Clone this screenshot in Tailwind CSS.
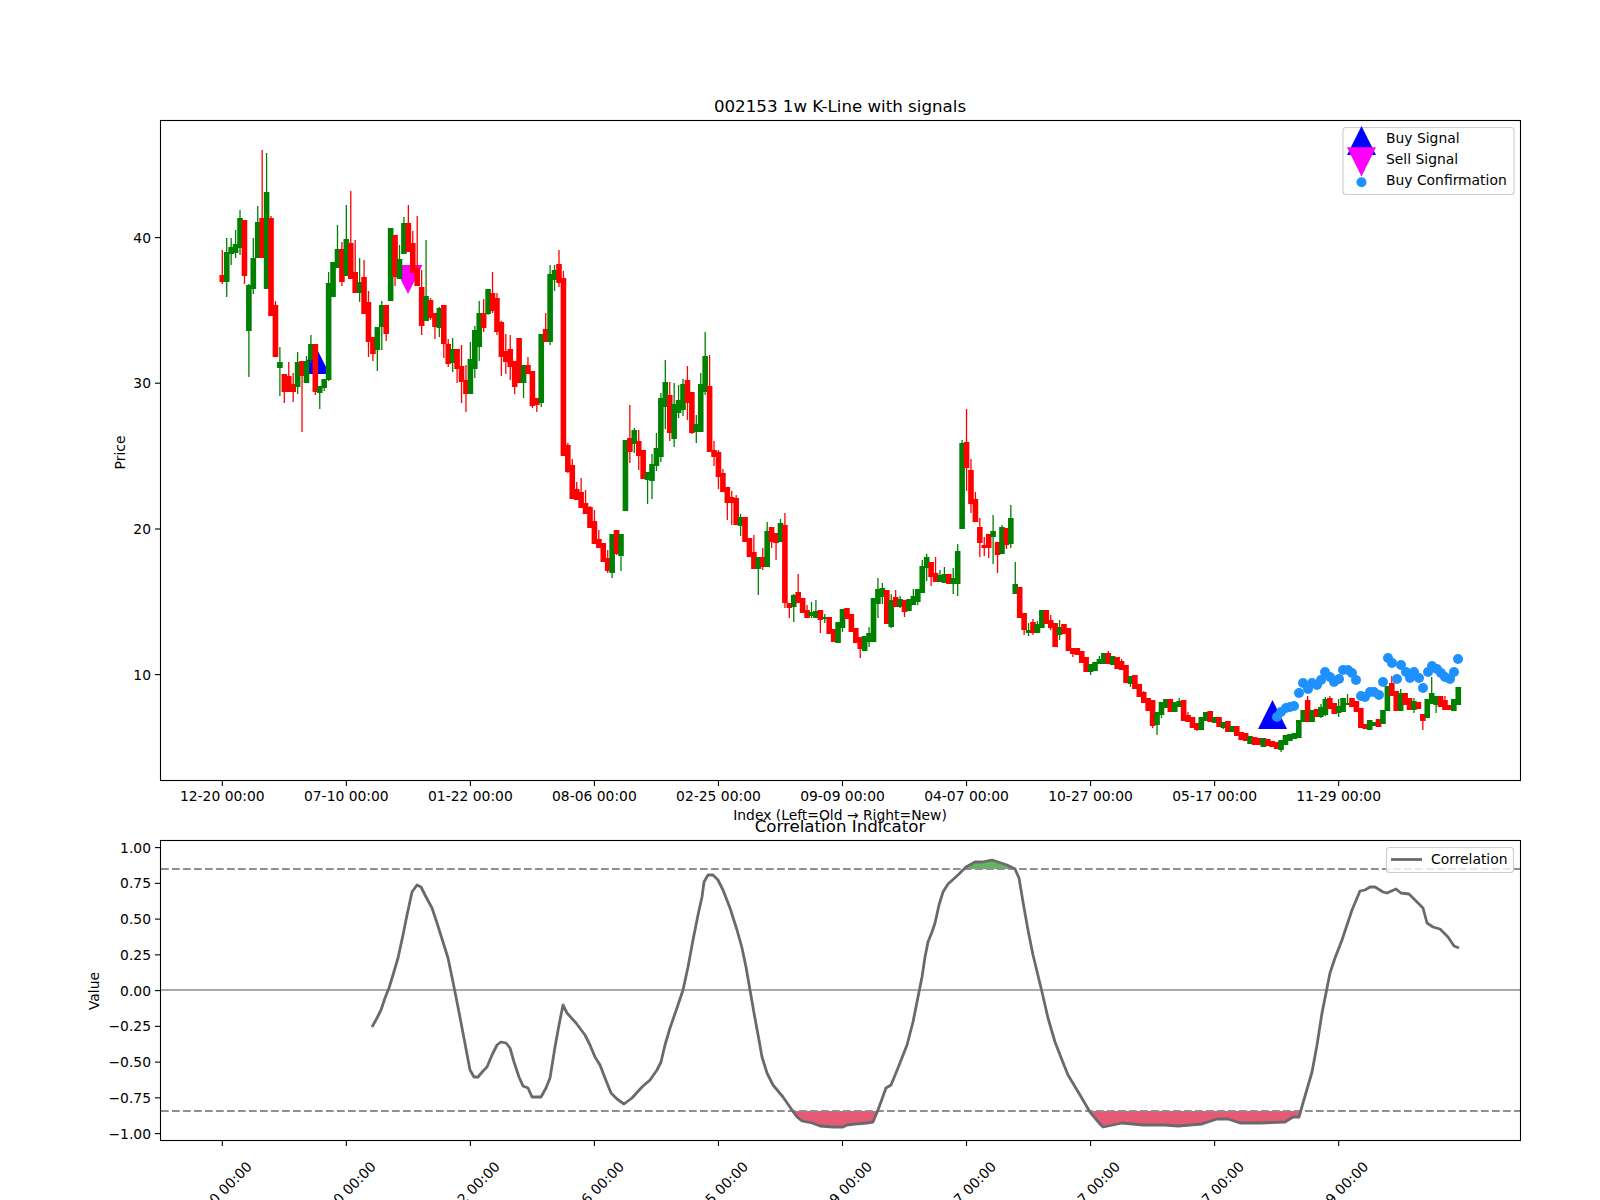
<!DOCTYPE html>
<html lang="en">
<head>
    <meta charset="UTF-8">
    <title>002153 1w K-Line with signals</title>
    <script src="https://cdn.jsdelivr.net/npm/@tailwindcss/browser@4"></script>
</head>
<body class="bg-white">
    <div class="w-[1600px] h-[1200px] overflow-hidden bg-white text-black font-['DejaVu_Sans',sans-serif]">

        <!-- K-line panel -->
        <svg id="price" class="block w-[1600px] h-[824px] overflow-visible" viewBox="0 0 1600 824" font-size="13.89">
            <text x="840" y="112" font-size="16.67" text-anchor="middle">002153 1w K-Line with signals</text>
            <g id="price-plot"></g>
            <rect x="160.5" y="120.5" width="1360" height="660" fill="none" stroke="#000" stroke-width="1.1"/>
            <g id="price-ticks"></g>
            <text transform="translate(125 452.5) rotate(-90)" text-anchor="middle">Price</text>
            <text x="840" y="820" text-anchor="middle">Index (Left=Old → Right=New)</text>

            <!-- legend -->
            <rect x="1343" y="127.5" width="171" height="67" rx="3" fill="#fff" fill-opacity="0.8" stroke="#ccc" stroke-width="1.1"/>
            <polygon points="1361.5,126 1376,155 1347,155" fill="#0000ff"/>
            <polygon points="1347,147.3 1376,147.3 1361.5,176.5" fill="#ff00ff"/>
            <circle cx="1361.5" cy="182.3" r="5" fill="#1e90ff"/>
            <text x="1386" y="143">Buy Signal</text>
            <text x="1386" y="164">Sell Signal</text>
            <text x="1386" y="185">Buy Confirmation</text>
        </svg>

        <!-- correlation panel -->
        <svg id="corr" class="block w-[1600px] h-[376px] overflow-visible" viewBox="0 824 1600 376" font-size="13.89">
            <text x="840" y="832" font-size="16.67" text-anchor="middle">Correlation Indicator</text>
            <g id="corr-plot"></g>
            <rect x="160.5" y="840.5" width="1360" height="300" fill="none" stroke="#000" stroke-width="1.1"/>
            <g id="corr-ticks"></g>
            <text transform="translate(99 991) rotate(-90)" text-anchor="middle">Value</text>

            <!-- legend -->
            <rect x="1386.5" y="847.5" width="127" height="25" rx="3" fill="#fff" fill-opacity="0.8" stroke="#ccc" stroke-width="1.1"/>
            <line x1="1391" y1="859.5" x2="1422" y2="859.5" stroke="#6a6a6a" stroke-width="2.8"/>
            <text x="1431" y="864">Correlation</text>
        </svg>
    </div>

    <script>
        const R = '#ff0000', G = '#008000';
        const X0 = 222.3, STEP = 4.43, TICK_STEP = 124.04;
        const LABELS = ['12-20 00:00', '07-10 00:00', '01-22 00:00', '08-06 00:00', '02-25 00:00', '09-09 00:00', '04-07 00:00', '10-27 00:00', '05-17 00:00', '11-29 00:00'];

        // color, body top, body bottom, wick top, wick bottom (screen px)
        const candles = [
            [R,275,282,250,284],[G,252,282,238,297],[G,247,254,238,265],[G,244,253,230,258],[G,218,248,210,255],
            [R,220,276,220,284],[G,285,331,284,377],[G,258,289,238,294],[G,222,258,206,258],[R,218,258,150,258],
            [G,192,289,153,289],[R,218,316,216,316],[R,305,357,301,357],[G,362,368,347,396],[R,374,392,374,403],
            [R,376,392,362,392],[R,384,392,373,402],[G,362,387,352,394],[R,361,376,361,432],[G,361,383,356,383],
            [G,344,360,335,363],[R,344,392,344,395],[G,386,393,386,409],[G,379,388,379,391],[G,283,380,272,381],
            [G,262,297,262,297],[G,249,268,225,268],[R,249,282,242,286],[G,239,276,205,276],[R,243,279,191,279],
            [R,272,293,240,293],[G,282,293,258,302],[R,277,314,260,314],[R,302,342,291,357],[R,337,354,337,361],
            [G,327,350,327,371],[G,305,327,301,350],[R,305,334,305,341],[G,228,301,228,301],[R,235,277,235,286],
            [G,259,279,245,279],[G,223,254,217,254],[R,223,252,205,252],[R,243,273,231,273],[R,268,286,216,286],
            [R,287,326,270,335],[G,296,321,240,321],[R,300,318,298,320],[R,313,327,313,339],[G,308,328,307,337],
            [R,305,344,305,358],[R,344,364,339,367],[G,349,363,338,372],[R,349,369,349,383],[R,366,382,345,403],
            [R,380,394,365,412],[G,359,394,342,394],[G,330,369,326,378],[G,313,347,301,361],[R,313,328,299,332],
            [G,289,314,289,315],[R,293,311,272,313],[R,298,332,293,335],[R,322,357,321,376],[R,351,362,334,374],
            [R,349,367,335,380],[R,361,387,361,394],[R,338,383,338,383],[G,365,383,365,398],[R,365,374,357,374],
            [R,371,406,371,408],[R,398,405,398,412],[G,334,403,334,407],[R,329,342,313,342],[G,274,342,265,345],
            [G,270,280,265,291],[R,264,283,250,287],[R,278,456,271,456],[R,445,472,443,473],[R,465,499,459,499],
            [R,489,500,482,500],[R,492,508,478,508],[R,503,514,490,514],[R,507,528,506,528],[R,521,544,510,544],
            [R,539,548,530,548],[R,543,562,543,562],[R,558,571,550,573],[G,534,573,534,578],[R,530,554,530,555],
            [G,534,556,534,571],[G,440,511,440,511],[R,438,452,405,463],[G,430,444,428,453],[R,441,456,430,470],
            [R,450,479,450,479],[G,472,480,472,504],[G,464,481,454,499],[G,448,466,433,471],[G,398,457,393,462],
            [G,382,407,360,429],[R,395,433,382,441],[G,404,439,383,447],[G,400,413,385,418],[G,384,410,379,416],
            [R,380,403,366,420],[R,392,433,392,434],[G,424,432,415,443],[G,384,432,373,432],[G,356,392,332,395],
            [R,386,452,355,452],[R,450,457,441,466],[R,452,477,450,489],[R,473,492,469,492],[R,487,503,487,520],
            [R,497,503,491,525],[R,498,525,495,525],[G,517,526,514,536],[R,517,542,517,542],[R,538,557,538,557],
            [R,552,569,535,569],[G,557,569,557,595],[R,557,567,548,570],[G,531,567,522,567],[R,527,542,527,548],
            [R,533,543,533,560],[G,523,542,519,542],[R,525,603,513,608],[R,603,608,603,618],[G,595,607,594,622],
            [R,592,603,574,603],[R,598,613,598,613],[R,610,618,605,618],[G,612,616,602,618],[G,611,618,600,618],
            [R,610,620,610,633],[G,617,619,614,623],[R,617,634,617,634],[R,629,642,629,642],[G,622,643,622,643],
            [G,609,628,609,632],[R,608,619,608,619],[R,614,632,614,632],[R,628,643,628,643],[R,637,649,637,658],
            [G,636,651,636,651],[G,633,642,627,647],[G,598,642,598,642],[G,589,604,578,618],[G,588,597,583,604],
            [R,590,624,590,624],[G,600,627,594,628],[R,597,607,590,607],[G,599,607,596,608],[R,600,612,600,617],
            [G,599,611,599,611],[G,596,605,589,605],[G,589,602,589,605],[G,566,593,560,593],[G,557,568,554,581],
            [R,562,577,562,586],[R,573,582,557,582],[G,575,582,570,582],[G,574,583,567,583],[R,574,584,574,584],
            [G,578,584,568,594],[G,551,584,544,596],[G,443,529,440,529],[R,442,468,409,491],[R,470,504,459,513],
            [R,499,522,492,522],[R,527,543,518,557],[R,545,548,537,556],[R,534,548,534,558],[G,531,537,515,564],
            [R,542,555,542,573],[G,527,554,525,554],[R,528,545,528,549],[G,518,544,505,548],[G,584,594,562,594],
            [R,587,618,587,618],[R,613,630,613,635],[G,630,633,623,636],[R,622,633,619,635],[G,624,633,621,633],
            [G,610,628,610,628],[R,610,624,610,624],[R,620,628,615,630],[R,623,647,623,647],[G,627,635,620,640],
            [R,624,634,624,634],[R,628,651,628,651],[R,648,654,648,657],[R,648,655,648,655],[R,651,663,651,663],
            [R,657,672,657,672],[G,664,672,664,675],[G,662,671,662,671],[G,659,664,656,664],[G,653,664,653,664],
            [R,653,664,651,664],[G,656,665,656,665],[R,657,669,657,669],[R,661,670,659,670],[R,665,683,665,683],
            [G,676,684,676,687],[R,675,689,675,689],[R,684,697,684,697],[R,692,703,691,703],[R,698,711,698,711],
            [R,700,726,700,728],[G,712,725,712,735],[G,702,715,702,718],[G,699,708,699,708],[R,699,712,699,712],
            [G,702,712,702,712],[G,701,707,698,707],[R,700,721,700,721],[R,715,722,712,722],[R,717,728,717,728],
            [R,723,730,723,731],[G,717,730,717,730],[G,712,721,712,721],[R,711,722,711,722],[G,717,723,717,723],
            [R,717,727,717,727],[G,722,728,722,729],[R,721,732,721,732],[G,726,732,726,732],[R,726,736,726,736],
            [R,732,740,732,740],[R,733,741,733,741],[G,736,744,736,744],[R,737,745,737,745],[R,738,745,738,745],
            [G,738,747,738,747],[R,739,746,739,746],[R,741,747,741,747],[R,742,749,742,749],[G,740,750,740,752],
            [G,735,745,735,745],[G,734,741,734,741],[G,733,739,733,739],[G,720,738,720,738],[G,710,722,710,722],
            [R,700,722,696,722],[G,710,722,710,722],[R,709,717,709,717],[G,707,717,704,718],[G,699,715,697,716],
            [R,698,709,696,709],[R,703,714,703,714],[G,706,713,699,717],[G,698,712,698,712],[G,703,705,694,704],
            [R,698,707,698,707],[R,701,712,701,712],[R,708,728,708,728],[R,724,729,724,729],[G,720,730,720,730],
            [G,722,726,722,726],[R,719,727,719,727],[G,710,724,710,724],[G,686,711,686,711],[R,683,696,676,696],
            [R,691,711,691,711],[G,693,711,689,711],[R,693,705,693,705],[R,698,710,698,710],[G,701,710,698,713],
            [R,702,709,702,709],[R,714,721,714,730],[G,699,718,699,718],[G,693,704,677,704],[G,696,705,696,713],
            [R,696,707,696,707],[R,700,710,696,710],[R,705,710,705,710],[G,699,711,699,711],[G,687,705,687,705]
        ];

        const confirmations = [
            [1277,717],[1281,712],[1286,708],[1290,707],[1294,706],[1299,693],[1303,683],[1308,689],[1312,683],[1317,685],
            [1321,680],[1325,672],[1330,677],[1334,682],[1339,679],[1343,670],[1348,670],[1352,673],[1356,680],[1361,696],
            [1365,697],[1370,692],[1374,692],[1379,695],[1383,682],[1388,658],[1392,663],[1397,679],[1401,665],[1406,672],
            [1410,678],[1414,672],[1419,678],[1423,688],[1428,672],[1432,666],[1437,669],[1441,673],[1445,677],[1450,679],
            [1454,672],[1458,659]
        ];

        const corr = [
            [372,1027],[377,1018],[381,1010],[385,998],[389,988],[393,975],[398,958],[403,935],[407,915],[412,892],
            [417,885],[421,887],[425,895],[432,908],[437,923],[443,942],[448,958],[453,982],[458,1007],[463,1033],
            [470,1070],[474,1077],[478,1077],[483,1071],[487,1067],[492,1055],[497,1045],[501,1042],[506,1043],[510,1048],
            [514,1062],[519,1077],[523,1086],[528,1088],[532,1097],[541,1097],[546,1088],[550,1078],[555,1047],[559,1025],
            [563,1005],[567,1013],[576,1023],[585,1035],[590,1045],[595,1057],[600,1065],[605,1078],[611,1093],[617,1099],
            [624,1104],[632,1098],[642,1087],[650,1080],[657,1070],[661,1062],[665,1045],[670,1028],[678,1005],[683,990],
            [688,967],[693,940],[698,915],[702,897],[704,882],[708,875],[713,875],[718,880],[723,890],[730,908],
            [737,930],[742,948],[746,967],[750,990],[754,1013],[759,1040],[762,1057],[767,1073],[773,1085],[783,1097],
            [792,1110],[797,1117],[802,1121],[812,1123],[820,1126],[833,1127],[843,1127],[847,1125],[855,1124],[867,1123],
            [873,1122],[878,1110],[886,1088],[891,1085],[898,1068],[907,1045],[913,1022],[918,997],[922,977],[925,957],
            [928,942],[932,932],[935,923],[939,905],[943,892],[948,884],[958,875],[966,867],[975,862],[982,862],
            [992,860],[998,862],[1007,865],[1015,869],[1019,878],[1023,902],[1028,930],[1033,955],[1042,992],[1048,1018],
            [1055,1042],[1062,1060],[1068,1075],[1080,1095],[1090,1112],[1100,1124],[1103,1127],[1113,1125],[1122,1123],[1133,1124],
            [1143,1125],[1165,1125],[1178,1126],[1202,1124],[1217,1119],[1228,1119],[1240,1123],[1260,1123],[1285,1122],[1293,1117],
            [1299,1117],[1303,1103],[1312,1072],[1317,1045],[1322,1013],[1327,988],[1330,973],[1335,958],[1342,940],[1352,910],
            [1360,891],[1365,890],[1370,887],[1375,887],[1383,892],[1387,893],[1396,889],[1401,893],[1409,894],[1423,908],
            [1427,923],[1433,927],[1440,929],[1448,937],[1454,946],[1459,948]
        ];

        // K-line panel: triangles sit under the candles, dots on top
        let plot = '';
        plot += '<polygon points="315,345 329.5,374 300.5,374" fill="#0000ff"/>';
        plot += '<polygon points="1272.5,700 1287,729 1258,729" fill="#0000ff"/>';
        plot += '<polygon points="393.5,265 422.5,265 408,294" fill="#ff00ff"/>';
        candles.forEach(([color, top, bottom, hi, lo], i) => {
            const x = X0 + STEP * i;
            plot += `<line x1="${x}" x2="${x}" y1="${hi}" y2="${lo}" stroke="${color}" stroke-width="1.3"/>`;
            plot += `<rect x="${x - 2.8}" y="${top}" width="5.6" height="${bottom - top}" fill="${color}"/>`;
        });
        confirmations.forEach(([x, y]) => {
            plot += `<circle cx="${x}" cy="${y}" r="5" fill="#1e90ff"/>`;
        });
        document.getElementById('price-plot').innerHTML = plot;

        // Correlation panel
        const band = (from, to, edge) => {
            const pts = corr.filter(([x]) => x >= from && x <= to);
            return [[from, edge], ...pts, [to, edge]].map(p => p.join(',')).join(' ');
        };
        const hline = (y, extra) => `<line x1="161" x2="1520" y1="${y}" y2="${y}" ${extra}/>`;
        let lower = '';
        lower += `<polygon points="${band(793, 877, 1111)}" fill="#dc143c" fill-opacity="0.7"/>`;
        lower += `<polygon points="${band(1090, 1300, 1111)}" fill="#dc143c" fill-opacity="0.7"/>`;
        lower += `<polygon points="${band(964, 1015, 869)}" fill="#008000" fill-opacity="0.6"/>`;
        lower += hline(990, 'stroke="#aaaaaa" stroke-width="2"');
        lower += hline(869, 'stroke="#8f8f8f" stroke-width="2" stroke-dasharray="7.7 3.3"');
        lower += hline(1111, 'stroke="#8f8f8f" stroke-width="2" stroke-dasharray="7.7 3.3"');
        lower += `<polyline points="${corr.map(p => p.join(',')).join(' ')}" fill="none" stroke="#6a6a6a" stroke-width="2.8" stroke-linejoin="round"/>`;
        document.getElementById('corr-plot').innerHTML = lower;

        // Ticks and tick labels
        const vTick = (x, y) => `<line x1="${x}" x2="${x}" y1="${y}" y2="${y + 5}" stroke="#000" stroke-width="1.1"/>`;
        const hTick = (y, label) => `<line x1="155" x2="160" y1="${y}" y2="${y}" stroke="#000" stroke-width="1.1"/>` +
            `<text x="151" y="${y + 5}" text-anchor="end">${label}</text>`;

        let priceTicks = '';
        LABELS.forEach((label, k) => {
            const x = X0 + TICK_STEP * k;
            priceTicks += vTick(x, 781) + `<text x="${x}" y="801" text-anchor="middle">${label}</text>`;
        });
        [[40, 237.6], [30, 383.2], [20, 529], [10, 674.6]].forEach(([v, y]) => { priceTicks += hTick(y, v); });
        document.getElementById('price-ticks').innerHTML = priceTicks;

        let corrTicks = '';
        LABELS.forEach((label, k) => {
            const x = X0 + TICK_STEP * k;
            corrTicks += vTick(x, 1141) + `<text x="${x - 3}" y="1199" text-anchor="middle" transform="rotate(-45 ${x - 3} 1194)">${label}</text>`;
        });
        ['1.00', '0.75', '0.50', '0.25', '0.00', '−0.25', '−0.50', '−0.75', '−1.00'].forEach((label, k) => {
            corrTicks += hTick(847.6 + 35.75 * k, label);
        });
        document.getElementById('corr-ticks').innerHTML = corrTicks;
    </script>
</body>
</html>
